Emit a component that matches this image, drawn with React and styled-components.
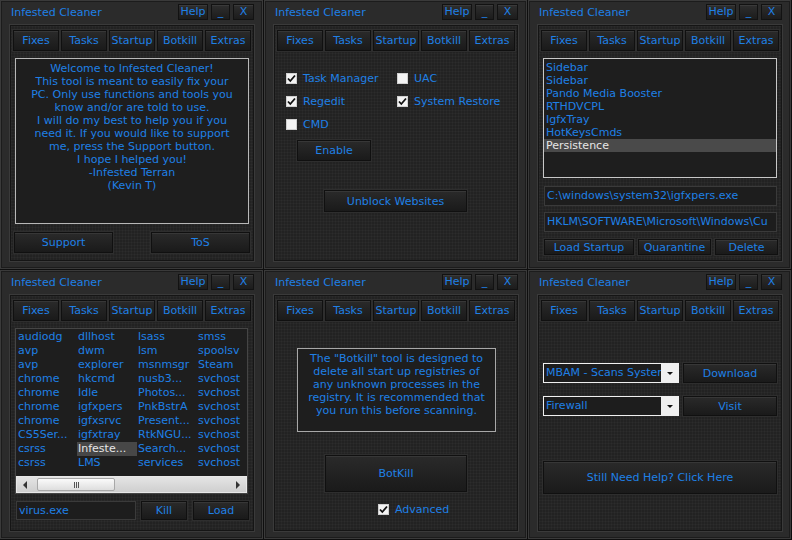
import React from 'react'
import styled, { createGlobalStyle } from 'styled-components'

const Global = createGlobalStyle`
  html, body { margin: 0; padding: 0; background: #0e0e0e; }
  * { box-sizing: border-box; }
`

const BLUE = '#1f80e6'

const Screen = styled.div`
  display: grid;
  grid-template-columns: repeat(3, 264px);
  grid-template-rows: repeat(2, 270px);
  width: 792px;
  height: 540px;
  background: #0e0e0e;
  font-family: 'DejaVu Sans', Verdana, sans-serif;
  font-size: 11px;
  color: ${BLUE};
`

const Panel = styled.div`
  width: 263px;
  height: 269px;
  display: flex;
  flex-direction: column;
  background: #2b2b2b;
  border: 1px solid #3a3a3a;
  box-shadow: inset 0 0 0 1px #1c1c1c;
`

const TitleBar = styled.div`
  height: 23px;
  display: flex;
  align-items: flex-start;
  padding: 3px 8px 0 10px;
`

const Title = styled.span`
  flex: 1;
  line-height: 16px;
  margin-top: 1px;
`

const WinButton = styled.div`
  width: ${p => p.$w}px;
  height: 16px;
  margin-left: 3px;
  display: flex;
  align-items: center;
  justify-content: center;
  background: linear-gradient(#2e2e2e, #1c1c1c);
  border: 1px solid #121212;
  box-shadow: inset 0 1px 0 #3a3a3a;
  line-height: 14px;
`

const Frame = styled.div`
  flex: 1;
  margin: 0 7px 6px 8px;
  padding: 5px 3px 0;
  border: 1px solid #3a3a3a;
  box-shadow: inset 0 0 0 1px #151515;
  background-color: #222;
  background-image: radial-gradient(#2c2c2c 0.9px, transparent 1.1px);
  background-size: 3px 3px;
  display: flex;
  flex-direction: column;
`

const Tabs = styled.div`
  display: flex;
  gap: 2px;
`

const Btn = styled.div`
  width: ${p => p.$w}px;
  height: ${p => p.$h || 21}px;
  margin-left: ${p => p.$ml || 0}px;
  margin-top: ${p => p.$mt || 0}px;
  flex-shrink: 0;
  display: flex;
  align-items: center;
  justify-content: center;
  background: linear-gradient(#2a2a2a, #1a1a1a);
  border: 1px solid #101010;
  box-shadow: inset 0 1px 0 #373737, 0 0 0 1px #2e2e2e;
  color: ${BLUE};
  white-space: nowrap;
`

const Body = styled.div`
  display: flex;
  flex-direction: column;
  align-items: flex-start;
`

const InfoBox = styled.div`
  width: ${p => p.$w}px;
  height: ${p => p.$h}px;
  margin: ${p => p.$mt}px 0 0 ${p => p.$ml}px;
  border: 1px solid ${p => p.$border || '#b8b8b8'};
  background: #1e1e1e;
  text-align: center;
  line-height: 13px;
  padding: ${p => p.$pt || 2}px ${p => p.$px || 0}px 0;
`

const Row = styled.div`
  display: flex;
  margin-top: ${p => p.$mt || 0}px;
  margin-left: ${p => p.$ml || 0}px;
  gap: ${p => p.$gap || 0}px;
  align-items: center;
`

const CheckGrid = styled.div`
  display: grid;
  grid-template-columns: 111px auto;
  row-gap: 10px;
  margin: 21px 0 0 9px;
`

const CheckItem = styled.label`
  display: flex;
  align-items: center;
  height: 13px;
  gap: 6px;
  line-height: 13px;
  margin-left: ${p => p.$ml || 0}px;
  margin-top: ${p => p.$mt || 0}px;
`

const Box = styled.span`
  width: 11px;
  height: 11px;
  background: #f4f4f4;
  border: 1px solid #d0d0d0;
  display: inline-flex;
  align-items: center;
  justify-content: center;
`

const Check = ({ on }) => (
  <Box>
    {on && (
      <svg width="9" height="9" viewBox="0 0 9 9">
        <path d="M1 4.5 L3.3 7 L8 1.5" stroke="#111" strokeWidth="1.8" fill="none" />
      </svg>
    )}
  </Box>
)

const ListBox = styled.div`
  width: 234px;
  height: 120px;
  margin: 7px 0 0 2px;
  border: 1px solid #c8c8c8;
  background: #1e1e1e;
  padding-top: 2px;
`

const ListItem = styled.div`
  height: 13px;
  line-height: 13px;
  padding-left: 2px;
  background: ${p => (p.$sel ? '#4a4a4a' : 'transparent')};
  color: ${p => (p.$sel ? '#e6e6e6' : BLUE)};
`

const TextField = styled.div`
  width: ${p => p.$w}px;
  height: ${p => p.$h || 20}px;
  margin-top: ${p => p.$mt || 0}px;
  margin-left: ${p => p.$ml || 0}px;
  border: 1px solid #3a3a3a;
  background: #1d1d1d;
  line-height: ${p => (p.$h || 20) - 2}px;
  padding-left: 2px;
  white-space: nowrap;
  overflow: hidden;
  flex-shrink: 0;
`

const ProcList = styled.div`
  width: 233px;
  height: 166px;
  margin: 7px 0 0 2px;
  border: 1px solid #454545;
  background: #1e1e1e;
  display: flex;
  flex-direction: column;
`

const ProcGrid = styled.div`
  flex: 1;
  display: grid;
  grid-template-columns: repeat(4, 60px);
  grid-auto-flow: column;
  grid-template-rows: repeat(10, 14px);
  padding: 1px 0 0 1px;
`

const Proc = styled.div`
  line-height: 14px;
  padding-left: 1px;
  white-space: nowrap;
  overflow: hidden;
  background: ${p => (p.$sel ? '#474747' : 'transparent')};
  color: ${p => (p.$sel ? '#e6e6e6' : BLUE)};
`

const ScrollBar = styled.div`
  height: 17px;
  border: 1px solid #e8e8e8;
  background: linear-gradient(#e4e4e4, #cfcfcf);
  display: flex;
  align-items: center;
  position: relative;
`

const Arrow = styled.span`
  width: 0;
  height: 0;
  border-top: 4px solid transparent;
  border-bottom: 4px solid transparent;
  ${p => (p.$right ? 'border-left: 4px solid #333; margin-left: auto; margin-right: 6px;' : 'border-right: 4px solid #333; margin-left: 6px;')}
`

const Thumb = styled.div`
  position: absolute;
  left: 20px;
  top: 1px;
  width: 78px;
  height: 13px;
  border: 1px solid #a8a8a8;
  border-radius: 2px;
  background: linear-gradient(#fafafa, #dedede);
  display: flex;
  align-items: center;
  justify-content: center;
  gap: 1px;
  & span { width: 1px; height: 6px; background: #555; }
`

const Combo = styled.div`
  width: 136px;
  height: 20px;
  border: 1px solid #f0f0f0;
  background: #1d1d1d;
  display: flex;
  flex-shrink: 0;
`

const ComboText = styled.div`
  flex: 1;
  overflow: hidden;
  white-space: nowrap;
  line-height: 18px;
  padding-left: 2px;
`

const ComboDrop = styled.div`
  width: 17px;
  background: #f0f0f0;
  display: flex;
  align-items: center;
  justify-content: center;
  &::after {
    content: '';
    border-left: 3px solid transparent;
    border-right: 3px solid transparent;
    border-top: 3px solid #111;
  }
`

const Window = ({ children }) => (
  <Panel>
    <TitleBar>
      <Title>Infested Cleaner</Title>
      <WinButton $w={30}>Help</WinButton>
      <WinButton $w={19}>_</WinButton>
      <WinButton $w={21}>X</WinButton>
    </TitleBar>
    <Frame>
      <Tabs>
        {['Fixes', 'Tasks', 'Startup', 'Botkill', 'Extras'].map(t => (
          <Btn key={t} $w={46}>{t}</Btn>
        ))}
      </Tabs>
      <Body>{children}</Body>
    </Frame>
  </Panel>
)

const startupItems = ['Sidebar', 'Sidebar', 'Pando Media Booster', 'RTHDVCPL', 'IgfxTray', 'HotKeysCmds', 'Persistence']

const procs = [
  'audiodg', 'avp', 'avp', 'chrome', 'chrome', 'chrome', 'chrome', 'CS5Ser...', 'csrss', 'csrss',
  'dllhost', 'dwm', 'explorer', 'hkcmd', 'Idle', 'igfxpers', 'igfxsrvc', 'igfxtray', 'Infeste...', 'LMS',
  'lsass', 'lsm', 'msnmsgr', 'nusb3...', 'Photos...', 'PnkBstrA', 'Present...', 'RtkNGU...', 'Search...', 'services',
  'smss', 'spoolsv', 'Steam', 'svchost', 'svchost', 'svchost', 'svchost', 'svchost', 'svchost', 'svchost',
]

export default function App() {
  return (
    <>
      <Global />
      <Screen>
        <Window>
          <InfoBox $w={234} $h={166} $mt={7} $ml={2} $pt={3} $px={12}>
            Welcome to Infested Cleaner!<br />
            This tool is meant to easily fix your PC. Only use functions and tools you know and/or are told to use.<br />
            I will do my best to help you if you need it. If you would like to support me, press the Support button.<br />
            I hope I helped you!<br />
            -Infested Terran<br />
            (Kevin T)
          </InfoBox>
          <Row $mt={8} $ml={1} $gap={38}>
            <Btn $w={99}>Support</Btn>
            <Btn $w={99}>ToS</Btn>
          </Row>
        </Window>

        <Window>
          <CheckGrid>
            <CheckItem><Check on />Task Manager</CheckItem>
            <CheckItem><Check />UAC</CheckItem>
            <CheckItem><Check on />Regedit</CheckItem>
            <CheckItem><Check on />System Restore</CheckItem>
            <CheckItem><Check />CMD</CheckItem>
          </CheckGrid>
          <Btn $w={74} $ml={20} $mt={9}>Enable</Btn>
          <Btn $w={143} $h={22} $ml={47} $mt={29}>Unblock Websites</Btn>
        </Window>

        <Window>
          <ListBox>
            {startupItems.map((s, i) => (
              <ListItem key={i} $sel={i === startupItems.length - 1}>{s}</ListItem>
            ))}
          </ListBox>
          <TextField $w={233} $mt={8} $ml={3}>C:\windows\system32\igfxpers.exe</TextField>
          <TextField $w={233} $mt={6} $ml={3}>HKLM\SOFTWARE\Microsoft\Windows\Cu</TextField>
          <Row $mt={7} $ml={3} $gap={4}>
            <Btn $w={90} $h={16}>Load Startup</Btn>
            <Btn $w={73} $h={16}>Quarantine</Btn>
            <Btn $w={63} $h={16}>Delete</Btn>
          </Row>
        </Window>

        <Window>
          <ProcList>
            <ProcGrid>
              {procs.map((p, i) => (
                <Proc key={i} $sel={p === 'Infeste...'}>{p}</Proc>
              ))}
            </ProcGrid>
            <ScrollBar>
              <Arrow />
              <Thumb><span /><span /><span /></Thumb>
              <Arrow $right />
            </ScrollBar>
          </ProcList>
          <Row $mt={7} $ml={3}>
            <TextField $w={120} $h={19}>virus.exe</TextField>
            <Btn $w={46} $h={19} $ml={5}>Kill</Btn>
            <Btn $w={56} $h={19} $ml={6}>Load</Btn>
          </Row>
        </Window>

        <Window>
          <InfoBox $w={199} $h={84} $mt={27} $ml={20} $border="#a8a8a8" $pt={3} $px={8}>
            The "Botkill" tool is designed to delete all start up registries of any unknown processes in the registry. It is recommended that you run this before scanning.
          </InfoBox>
          <Btn $w={142} $h={37} $ml={48} $mt={23}>BotKill</Btn>
          <CheckItem $ml={101} $mt={11}><Check on />Advanced</CheckItem>
        </Window>

        <Window>
          <Row $mt={42} $ml={2} $gap={4}>
            <Combo><ComboText>MBAM - Scans System</ComboText><ComboDrop /></Combo>
            <Btn $w={94} $h={20}>Download</Btn>
          </Row>
          <Row $mt={13} $ml={2} $gap={4}>
            <Combo><ComboText>Firewall</ComboText><ComboDrop /></Combo>
            <Btn $w={94} $h={20}>Visit</Btn>
          </Row>
          <Btn $w={234} $h={33} $ml={2} $mt={45}>Still Need Help? Click Here</Btn>
        </Window>
      </Screen>
    </>
  )
}
